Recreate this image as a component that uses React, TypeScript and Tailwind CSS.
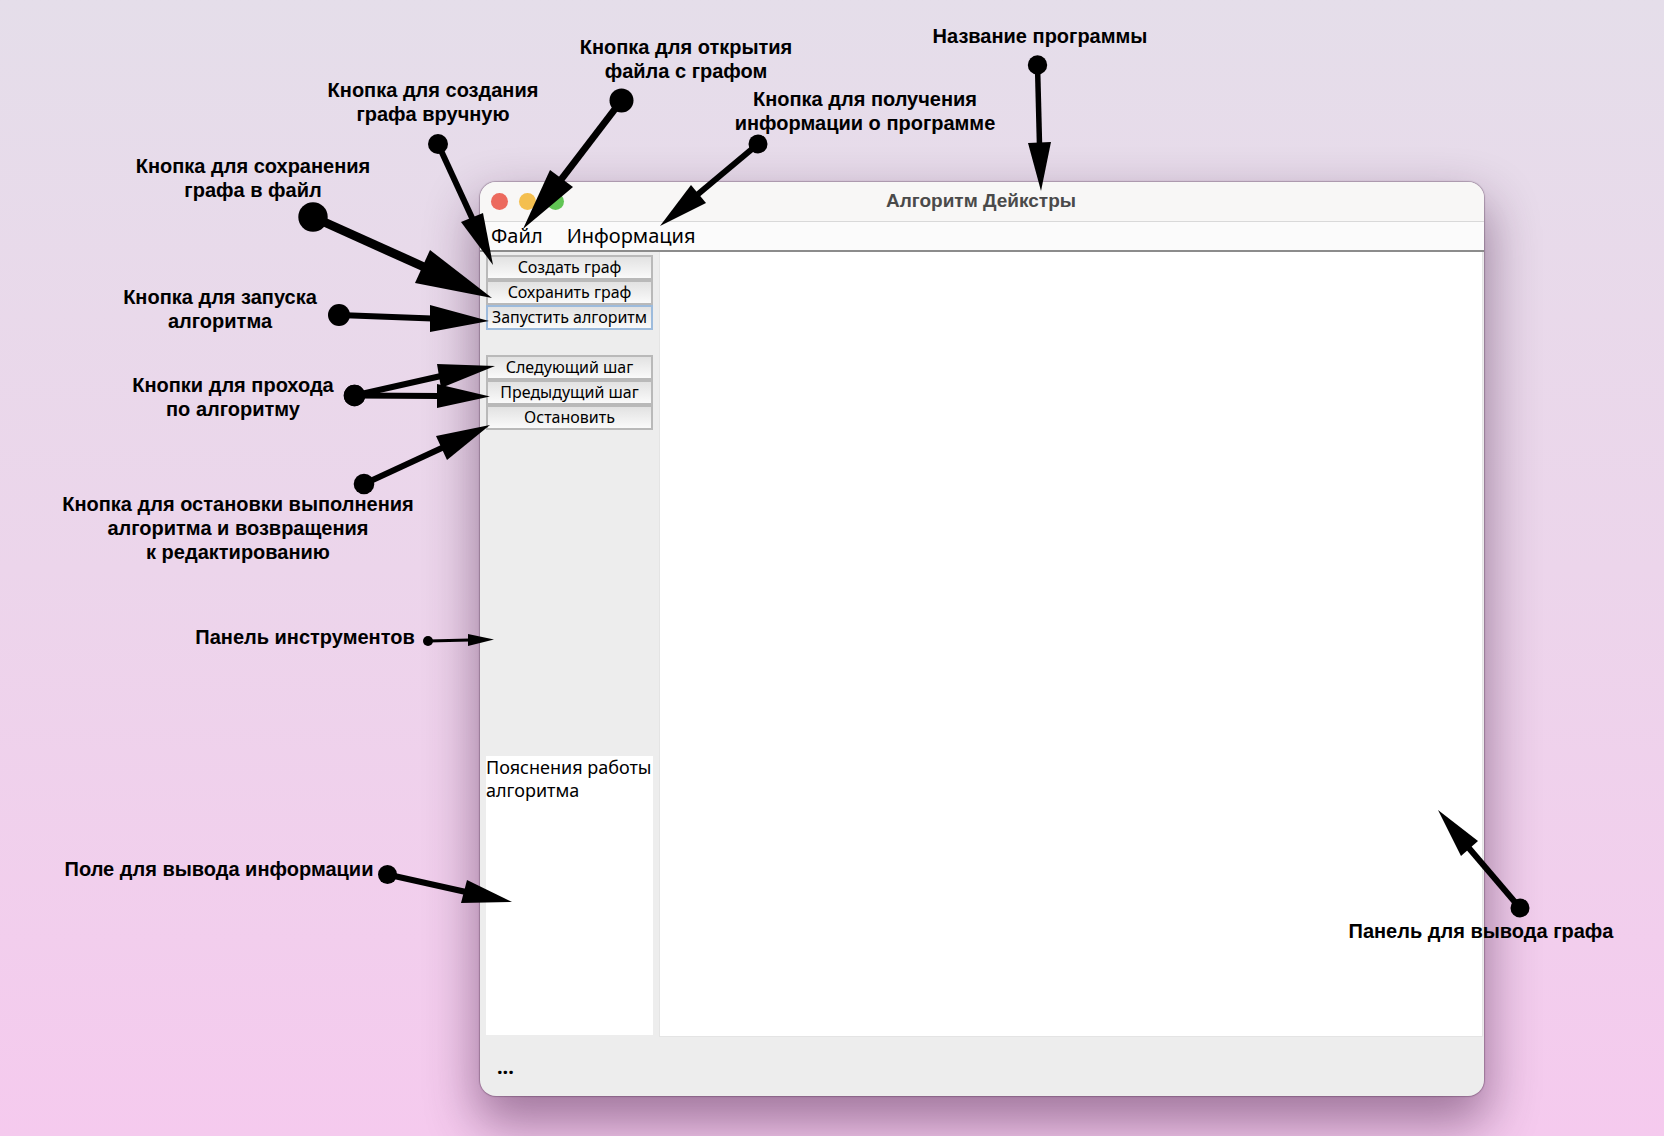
const labels = [
  { at: "left-[686px] top-[35px]", lines: ["Кнопка для открытия", "файла с графом"] },
  { at: "left-[1040px] top-[24px]", lines: ["Название программы"] },
  { at: "left-[433px] top-[78px]", lines: ["Кнопка для создания", "графа вручную"] },
  { at: "left-[865px] top-[87px]", lines: ["Кнопка для получения", "информации о программе"] },
  { at: "left-[253px] top-[154px]", lines: ["Кнопка для сохранения", "графа в файл"] },
  { at: "left-[220px] top-[285px]", lines: ["Кнопка для запуска", "алгоритма"] },
  { at: "left-[233px] top-[373px]", lines: ["Кнопки для прохода", "по алгоритму"] },
  { at: "left-[238px] top-[492px]", lines: ["Кнопка для остановки выполнения", "алгоритма и возвращения", "к редактированию"] },
  { at: "left-[305px] top-[625px]", lines: ["Панель инструментов"] },
  { at: "left-[219px] top-[857px]", lines: ["Поле для вывода информации"] },
  { at: "left-[1481px] top-[919px]", lines: ["Панель для вывода графа"] },
];

type Arrow = { dot: [number, number]; r: number; neck: [number, number]; head: string; w: number };

const arrows: Arrow[] = [
  { dot: [438, 144], r: 10, neck: [473, 220], head: "493,265 461,222 483,213", w: 6 },
  { dot: [313, 217], r: 14.7, neck: [424, 267], head: "492,298 430,250 415,283", w: 9 },
  { dot: [621.5, 100.5], r: 12, neck: [560, 181], head: "523,229 550,170 573,187", w: 7 },
  { dot: [758, 144], r: 9.5, neck: [697, 195], head: "660,226 691,185 706,203", w: 6 },
  { dot: [1037.5, 65], r: 9.7, neck: [1039.5, 145], head: "1041,191 1028,143 1051,142", w: 5.5 },
  { dot: [339, 315], r: 11, neck: [432, 318.5], head: "489,321 430,305 430,332", w: 6 },
  { dot: [354.5, 395.5], r: 10.7, neck: [441, 376], head: "495,366 437,364 441,388", w: 6 },
  { dot: [354.5, 395.5], r: 10.7, neck: [440, 396], head: "490,396.5 437,384 437,408", w: 6 },
  { dot: [364, 484], r: 10.3, neck: [444, 447], head: "490,425 436,436 447,460", w: 6 },
  { dot: [428, 641], r: 5, neck: [470, 640], head: "494,639.5 468,634 468,646", w: 3 },
  { dot: [387.5, 874.5], r: 9.5, neck: [466, 892], head: "512,902 467,880 461,903", w: 6 },
  { dot: [1520, 908], r: 9.5, neck: [1468, 847], head: "1438,810 1478,841 1461,856", w: 6 },
];

function ToolButton({ children, active = false }: { children: string; active?: boolean }) {
  return (
    <button
      type="button"
      className={
        "flex h-[25px] w-full items-center justify-center border-2 bg-linear-to-b from-[#e2e2e2] to-[#fafafa] pb-px text-base leading-5 whitespace-nowrap text-black " +
        (active ? "border-[#9dbbdc]" : "border-[#b9b9b9]")
      }
    >
      {children}
    </button>
  );
}

function AppWindow() {
  return (
    <main className="flex flex-1 flex-col overflow-hidden rounded-2xl bg-[#ededed] font-['Noto_Sans',sans-serif] shadow-[0_0_1px_1px_rgba(60,30,60,0.3),0_24px_50px_4px_rgba(60,20,60,0.46)]">
      <header className="flex h-10 items-center border-b border-[#d9d9d9] bg-[#f8f7f6] pl-[11px]">
        <div className="flex gap-[11px]">
          <button type="button" aria-label="Закрыть" className="size-[17px] rounded-full bg-[#ec6a5e]" />
          <button type="button" aria-label="Свернуть" className="size-[17px] rounded-full bg-[#f4bf4f]" />
          <button type="button" aria-label="Развернуть" className="size-[17px] rounded-full bg-[#61c554]" />
        </div>
        <h1 className="flex-1 pr-[86px] text-center font-['Liberation_Sans',sans-serif] text-[19px] font-bold text-[#4a4a4a]">
          Алгоритм Дейкстры
        </h1>
      </header>
      <nav className="flex h-[30px] items-center gap-6 border-b-2 border-[#8c8c8c] bg-[#fbfbfb] pl-[11px] text-xl leading-6 text-black">
        <button type="button">Файл</button>
        <button type="button">Информация</button>
      </nav>
      <div className="flex flex-1">
        <aside className="flex w-[179px] shrink-0 flex-col justify-between px-[6px] pt-[3px] pb-[2px]">
          <div>
            <ToolButton>Создать граф</ToolButton>
            <ToolButton>Сохранить граф</ToolButton>
            <ToolButton active>Запустить алгоритм</ToolButton>
            <div className="h-[25px]" />
            <ToolButton>Следующий шаг</ToolButton>
            <ToolButton>Предыдущий шаг</ToolButton>
            <ToolButton>Остановить</ToolButton>
          </div>
          <textarea
            readOnly
            aria-label="Пояснения"
            className="h-[279px] w-full resize-none overflow-hidden bg-white text-[18px] leading-[23px] whitespace-pre text-black outline-none"
            value={"Пояснения работы\nалгоритма"}
          />
        </aside>
        <section aria-label="Граф" className="mr-px flex-1 border border-t-0 border-[#e4e4e4] bg-white" />
      </div>
      <footer className="flex h-[59px] items-center pl-[17px] text-xl font-bold text-black">...</footer>
    </main>
  );
}

export default function App() {
  return (
    <div className="relative flex min-h-screen flex-col overflow-hidden bg-linear-to-b from-[#e5deea] via-[#ecd5eb] to-[#f5caee] pt-[182px] pr-[180px] pb-10 pl-[480px]">
      <AppWindow />
      <svg className="pointer-events-none absolute top-0 left-0" width="1664" height="1136" viewBox="0 0 1664 1136" aria-hidden="true">
        {arrows.map((a) => (
          <g key={a.head} stroke="black">
            <line x1={a.dot[0]} y1={a.dot[1]} x2={a.neck[0]} y2={a.neck[1]} strokeWidth={a.w} />
            <circle cx={a.dot[0]} cy={a.dot[1]} r={a.r} stroke="none" />
            <polygon points={a.head} stroke="none" />
          </g>
        ))}
      </svg>
      {labels.map((l) => (
        <p
          key={l.lines[0]}
          className={
            "absolute -translate-x-1/2 text-center font-['Liberation_Sans',sans-serif] text-xl leading-6 font-bold whitespace-nowrap text-black " +
            l.at
          }
        >
          {l.lines.map((line) => (
            <span key={line} className="block">
              {line}
            </span>
          ))}
        </p>
      ))}
    </div>
  );
}
